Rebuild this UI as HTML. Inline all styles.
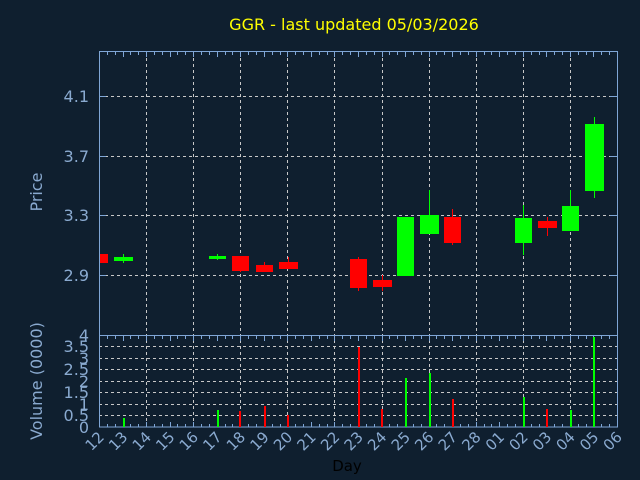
<!DOCTYPE html>
<html><head><meta charset="utf-8"><style>
html,body{margin:0;padding:0;background:#0f1f2f;}
svg{display:block;font-family:"DejaVu Sans","Liberation Sans",sans-serif;}
</style></head><body>
<svg width="640" height="480" xmlns="http://www.w3.org/2000/svg">
<rect width="640" height="480" fill="#0f1f2f"/>
<text x="354" y="30" fill="#ffff00" font-size="16" text-anchor="middle">GGR - last updated 05/03/2026</text>
<g stroke="#c8c8c8" stroke-width="1" stroke-dasharray="3,3">
<line x1="99" y1="96.5" x2="617" y2="96.5"/><line x1="99" y1="156.5" x2="617" y2="156.5"/><line x1="99" y1="215.5" x2="617" y2="215.5"/><line x1="99" y1="275.5" x2="617" y2="275.5"/>
<line x1="99" y1="346.5" x2="617" y2="346.5"/><line x1="99" y1="358.5" x2="617" y2="358.5"/><line x1="99" y1="369.5" x2="617" y2="369.5"/><line x1="99" y1="381.5" x2="617" y2="381.5"/><line x1="99" y1="392.5" x2="617" y2="392.5"/><line x1="99" y1="404.5" x2="617" y2="404.5"/><line x1="99" y1="415.5" x2="617" y2="415.5"/>
<line x1="146.5" y1="52" x2="146.5" y2="427"/><line x1="193.5" y1="52" x2="193.5" y2="427"/><line x1="240.5" y1="52" x2="240.5" y2="427"/><line x1="287.5" y1="52" x2="287.5" y2="427"/><line x1="334.5" y1="52" x2="334.5" y2="427"/><line x1="382.5" y1="52" x2="382.5" y2="427"/><line x1="429.5" y1="52" x2="429.5" y2="427"/><line x1="476.5" y1="52" x2="476.5" y2="427"/><line x1="523.5" y1="52" x2="523.5" y2="427"/><line x1="570.5" y1="52" x2="570.5" y2="427"/>
</g>
<g>
<rect x="99" y="254" width="9" height="9" fill="#ff0000"/>
<line x1="123.5" y1="254" x2="123.5" y2="263" stroke="#00ff00"/><rect x="114" y="257" width="19" height="4" fill="#00ff00"/>
<line x1="217.5" y1="254" x2="217.5" y2="260" stroke="#00ff00"/><rect x="209" y="256" width="17" height="3" fill="#00ff00"/>
<line x1="240.5" y1="256" x2="240.5" y2="272" stroke="#ff0000"/><rect x="232" y="256" width="17" height="15" fill="#ff0000"/>
<line x1="264.5" y1="262" x2="264.5" y2="272" stroke="#ff0000"/><rect x="256" y="265" width="17" height="7" fill="#ff0000"/>
<line x1="288.5" y1="257" x2="288.5" y2="269" stroke="#ff0000"/><rect x="279" y="262" width="19" height="7" fill="#ff0000"/>
<line x1="358.5" y1="257" x2="358.5" y2="291" stroke="#ff0000"/><rect x="350" y="259" width="17" height="29" fill="#ff0000"/>
<line x1="382.5" y1="275" x2="382.5" y2="291" stroke="#ff0000"/><rect x="373" y="280" width="19" height="7" fill="#ff0000"/>
<rect x="397" y="217" width="17" height="59" fill="#00ff00"/>
<line x1="429.5" y1="190" x2="429.5" y2="234" stroke="#00ff00"/><rect x="420" y="215" width="19" height="19" fill="#00ff00"/>
<line x1="452.5" y1="209" x2="452.5" y2="245" stroke="#ff0000"/><rect x="444" y="217" width="17" height="26" fill="#ff0000"/>
<line x1="523.5" y1="205" x2="523.5" y2="255" stroke="#00ff00"/><rect x="515" y="218" width="17" height="25" fill="#00ff00"/>
<line x1="547.5" y1="217" x2="547.5" y2="236" stroke="#ff0000"/><rect x="538" y="221" width="19" height="7" fill="#ff0000"/>
<line x1="570.5" y1="190" x2="570.5" y2="231" stroke="#00ff00"/><rect x="562" y="206" width="17" height="25" fill="#00ff00"/>
<line x1="594.5" y1="117" x2="594.5" y2="198" stroke="#00ff00"/><rect x="585" y="124" width="19" height="67" fill="#00ff00"/>
</g>
<g stroke="#7fa6d6" fill="none">
<rect x="99.5" y="51.5" width="518" height="375.5"/>
<line x1="99" y1="335.5" x2="617" y2="335.5"/>
</g>
<g stroke="#7fa6d6" stroke-width="1" id="ticks"></g>
<g>
<rect x="123" y="418" width="2" height="9" fill="#00ff00"/>
<rect x="217" y="410" width="2" height="17" fill="#00ff00"/>
<rect x="239" y="411" width="2" height="16" fill="#ff0000"/>
<rect x="264" y="406" width="2" height="21" fill="#ff0000"/>
<rect x="287" y="415" width="2" height="12" fill="#ff0000"/>
<rect x="358" y="347" width="2" height="80" fill="#ff0000"/>
<rect x="381" y="409" width="2" height="18" fill="#ff0000"/>
<rect x="405" y="378" width="2" height="49" fill="#00ff00"/>
<rect x="429" y="373" width="2" height="54" fill="#00ff00"/>
<rect x="452" y="399" width="2" height="28" fill="#ff0000"/>
<rect x="523" y="397" width="2" height="30" fill="#00ff00"/>
<rect x="546" y="409" width="2" height="18" fill="#ff0000"/>
<rect x="570" y="410" width="2" height="17" fill="#00ff00"/>
<rect x="593" y="337" width="2" height="90" fill="#00ff00"/>
</g>
<g fill="#8aaad0" font-size="16" text-anchor="end">
<text x="89" y="102">4.1</text><text x="89" y="162">3.7</text><text x="89" y="221">3.3</text><text x="89" y="281">2.9</text>
<text x="89" y="341">4</text><text x="89" y="352">3.5</text><text x="89" y="364">3</text><text x="89" y="375">2.5</text><text x="89" y="387">2</text><text x="89" y="398">1.5</text><text x="89" y="410">1</text><text x="89" y="421">0.5</text><text x="89" y="433">0</text>
</g>
<text transform="translate(42,192) rotate(-90)" fill="#8aaad0" font-size="16" text-anchor="middle">Price</text>
<text transform="translate(42,381) rotate(-90)" fill="#8aaad0" font-size="16" text-anchor="middle">Volume (0000)</text>
<g fill="#8aaad0" font-size="15" text-anchor="end" id="xl"></g>
<text x="347" y="471" fill="#000" font-size="15" text-anchor="middle">Day</text>
<script>
var t=document.getElementById('ticks'),xl=document.getElementById('xl'),ns='http://www.w3.org/2000/svg';
var labs=['12','13','14','15','16','17','18','19','20','21','22','23','24','25','26','27','28','01','02','03','04','05','06'];
function ln(a,b,c,d){var l=document.createElementNS(ns,'line');l.setAttribute('x1',a);l.setAttribute('y1',b);l.setAttribute('x2',c);l.setAttribute('y2',d);t.appendChild(l);}
for(var i=0;i<=66;i++){var x=Math.round(99+i*518/66)+0.5;var h=(i%3==0)?5:3;ln(x,52,x,52+h);ln(x,336,x,336+h);ln(x,427,x,427-h);}
[96.5,156.5,215.5,275.5].forEach(function(y){ln(99,y,106,y);ln(617,y,610,y);});
labs.forEach(function(s,i){var x=99+i*518/22;var e=document.createElementNS(ns,'text');e.setAttribute('transform','translate('+(x+6)+',438) rotate(-45)');e.textContent=s;xl.appendChild(e);});
</script>
</svg>
</body></html>
